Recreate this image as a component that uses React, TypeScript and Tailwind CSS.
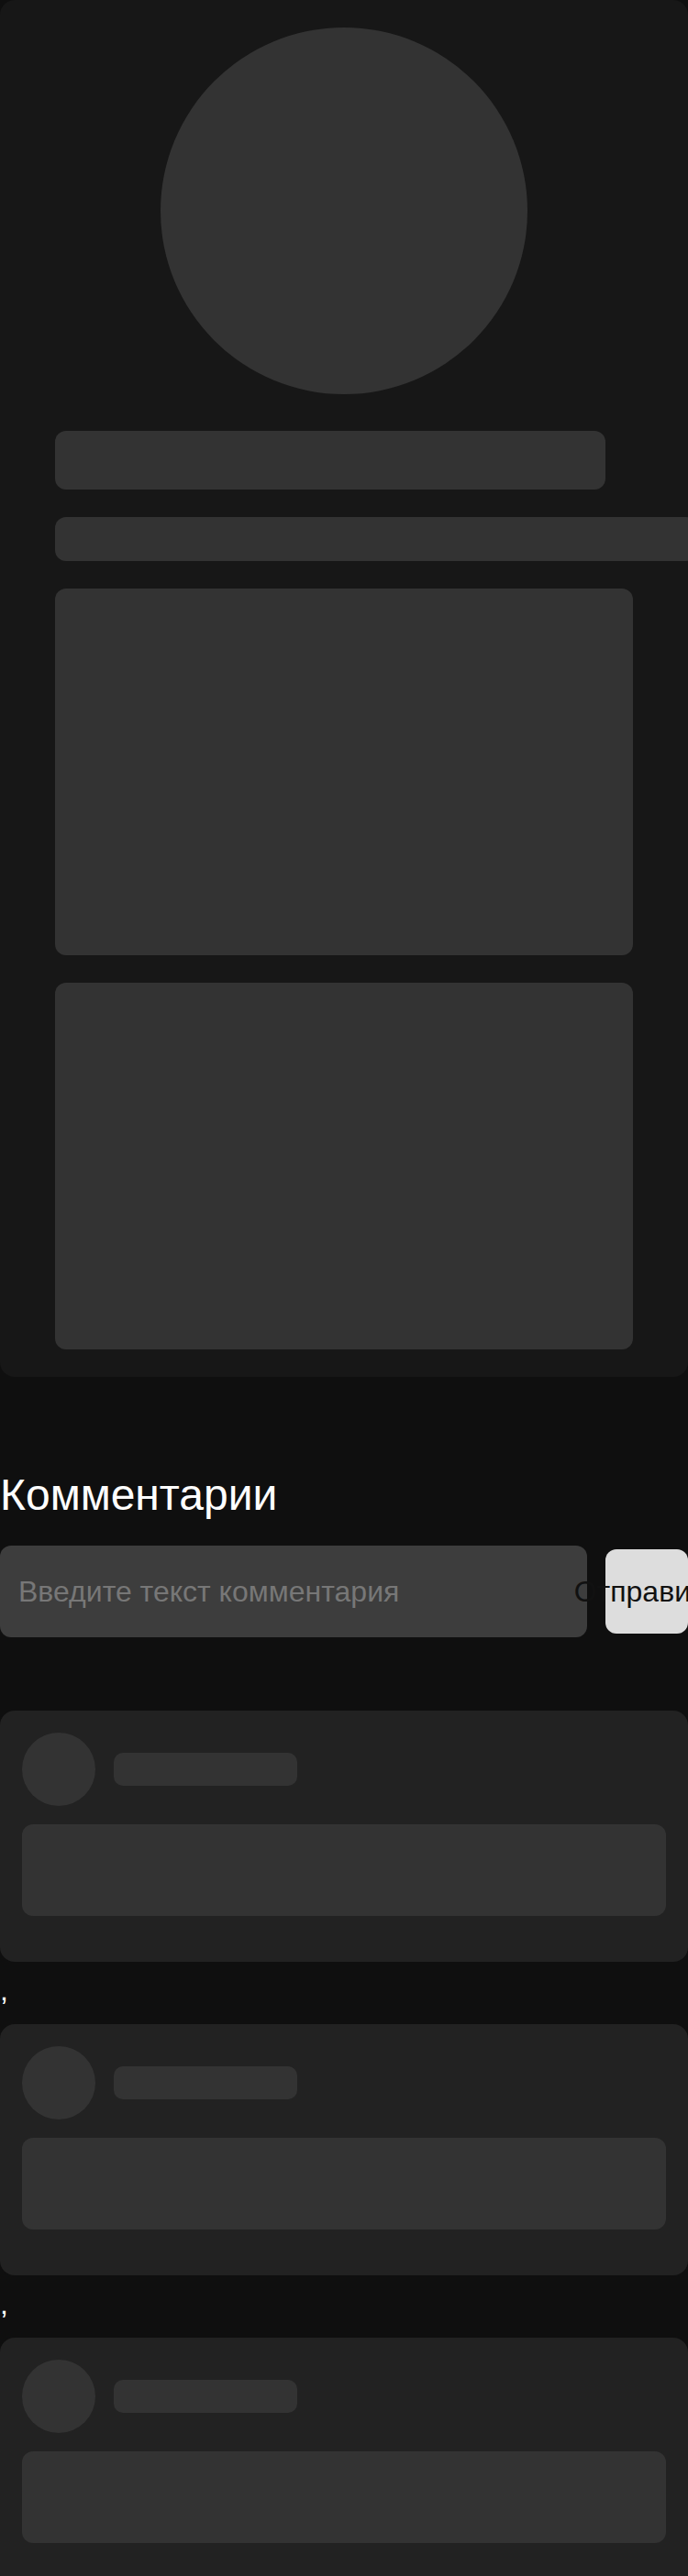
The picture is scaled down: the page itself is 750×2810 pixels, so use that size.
import React from "react";

const CommentSkeleton = () => (
    <div className="rounded-2xl bg-[#222222] px-6 pt-6 pb-[50px]">
        <div className="flex items-center gap-5">
            <div className="w-20 h-20 rounded-full bg-[#333333] shrink-0" />
            <div className="w-[200px] h-9 rounded-[10px] bg-[#333333]" />
        </div>
        <div className="mt-5 h-[100px] rounded-xl bg-[#333333]" />
    </div>
);

const App = () => {
    const comments = [1, 2, 3];

    return (
        <div className="h-[2810px] overflow-hidden bg-[#0f0f0f] text-white text-[32px] font-['Liberation_Sans',Arial,sans-serif]">
            {/* Post skeleton */}
            <div className="rounded-2xl bg-[#171717] px-[60px] pt-[30px] pb-[30px]">
                <div className="mx-auto w-[400px] h-[400px] rounded-full bg-[#333333]" />
                <div className="mt-10 w-[600px] h-16 rounded-xl bg-[#333333]" />
                <div className="mt-[30px] w-[700px] h-12 rounded-xl bg-[#333333]" />
                <div className="mt-[30px] w-[630px] h-[400px] rounded-xl bg-[#333333]" />
                <div className="mt-[30px] w-[630px] h-[400px] rounded-xl bg-[#333333]" />
            </div>

            {/* Comments */}
            <section className="mt-[105px]">
                <h1 className="text-5xl leading-none font-normal">Комментарии</h1>
                <div className="mt-[31px] flex items-center gap-5">
                    <input
                        type="text"
                        placeholder="Введите текст комментария"
                        className="w-[640px] h-[100px] shrink-0 rounded-xl bg-[#3d3d3d] px-5 text-[32px] text-white placeholder:text-[#777777] outline-none"
                    />
                    <button className="w-[90px] h-[92px] shrink-0 rounded-xl bg-[#dddddd] text-[#111111] flex items-center justify-center">
                        <span className="shrink-0 whitespace-nowrap">Отправить</span>
                    </button>
                </div>

                <div className="mt-20">
                    {comments.map((c, i) => (
                        <React.Fragment key={c}>
                            {i > 0 && <div className="h-[68px] pt-[15px] leading-none">,</div>}
                            <CommentSkeleton />
                        </React.Fragment>
                    ))}
                </div>
            </section>
        </div>
    );
};

export default App;
